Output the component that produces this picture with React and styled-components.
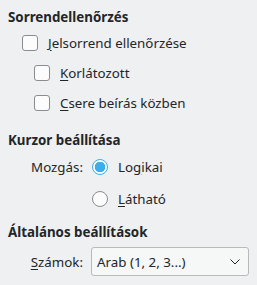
import React from 'react';
import styled, { createGlobalStyle } from 'styled-components';

const GlobalStyle = createGlobalStyle`
  html, body {
    margin: 0;
    padding: 0;
    background: #eff0f1;
  }
  body {
    font-family: "Noto Sans", "DejaVu Sans", sans-serif;
    font-size: 13.33px;
    color: #232629;
  }
`;

const Page = styled.div`
  width: 257px;
  height: 285px;
  box-sizing: border-box;
  padding: 6px 8px 0 8px;
  display: flex;
  flex-direction: column;
`;

const Heading = styled.div`
  font-weight: bold;
  height: 22px;
  line-height: 22px;
  margin-top: ${props => props.gap || 0}px;
`;

const Row = styled.label`
  display: flex;
  align-items: center;
  height: 30px;
  padding-left: ${props => props.indent}px;
  gap: 10px;
`;

const Box = styled.span`
  width: 14px;
  height: 14px;
  border: 1px solid #8a8d8f;
  border-radius: 3px;
  background: #fcfcfc;
  flex: none;
`;

const Mn = styled.span`
  text-decoration: underline;
  text-underline-offset: 2px;
`;

const FormRow = styled.div`
  display: grid;
  grid-template-columns: 69px 1fr;
  align-items: center;
  padding-left: 14px;
  height: ${props => props.h || 31}px;
`;

const FieldLabel = styled.span`
  text-align: right;
  padding-right: 8px;
`;

const RadioRow = styled.label`
  display: flex;
  align-items: center;
  gap: 10px;
  padding-left: 1px;
`;

const Radio = styled.span`
  width: 14px;
  height: 14px;
  border-radius: 50%;
  border: 1px solid ${props => props.checked ? '#3daee9' : '#8a8d8f'};
  background: ${props => props.checked ? 'radial-gradient(circle, #3daee9 0 5px, #fcfcfc 5.5px)' : '#fcfcfc'};
  flex: none;
`;

const Combo = styled.div`
  box-sizing: border-box;
  height: 29px;
  width: 158px;
  border: 1px solid #b8babc;
  border-radius: 3px;
  background: #f6f7f7;
  display: flex;
  align-items: center;
  justify-content: space-between;
  padding: 0 8px 0 5px;
`;

const Chevron = () => (
  <svg width="10" height="6" viewBox="0 0 10 6">
    <path d="M0.5 0.5 L5 5 L9.5 0.5" fill="none" stroke="#232629" strokeWidth="1" />
  </svg>
);

export default function App() {
  return (
    <Page>
      <GlobalStyle />
      <Heading>Sorrendellenőrzés</Heading>
      <Row indent={14}>
        <Box />
        <span><Mn>J</Mn>elsorrend ellenőrzése</span>
      </Row>
      <Row indent={26}>
        <Box />
        <span><Mn>K</Mn>orlátozott</span>
      </Row>
      <Row indent={26}>
        <Box />
        <span><Mn>C</Mn>sere beírás közben</span>
      </Row>
      <Heading gap={11}>Kurzor beállítása</Heading>
      <FormRow h={32}>
        <FieldLabel>Mozgás:</FieldLabel>
        <RadioRow>
          <Radio checked />
          <span>Lo<Mn>g</Mn>ikai</span>
        </RadioRow>
      </FormRow>
      <FormRow>
        <span />
        <RadioRow>
          <Radio />
          <span><Mn>L</Mn>átható</span>
        </RadioRow>
      </FormRow>
      <Heading gap={7}>Általános beállítások</Heading>
      <FormRow h={37}>
        <FieldLabel><Mn>S</Mn>zámok:</FieldLabel>
        <Combo>
          <span>Arab (1, 2, 3...)</span>
          <Chevron />
        </Combo>
      </FormRow>
    </Page>
  );
}
